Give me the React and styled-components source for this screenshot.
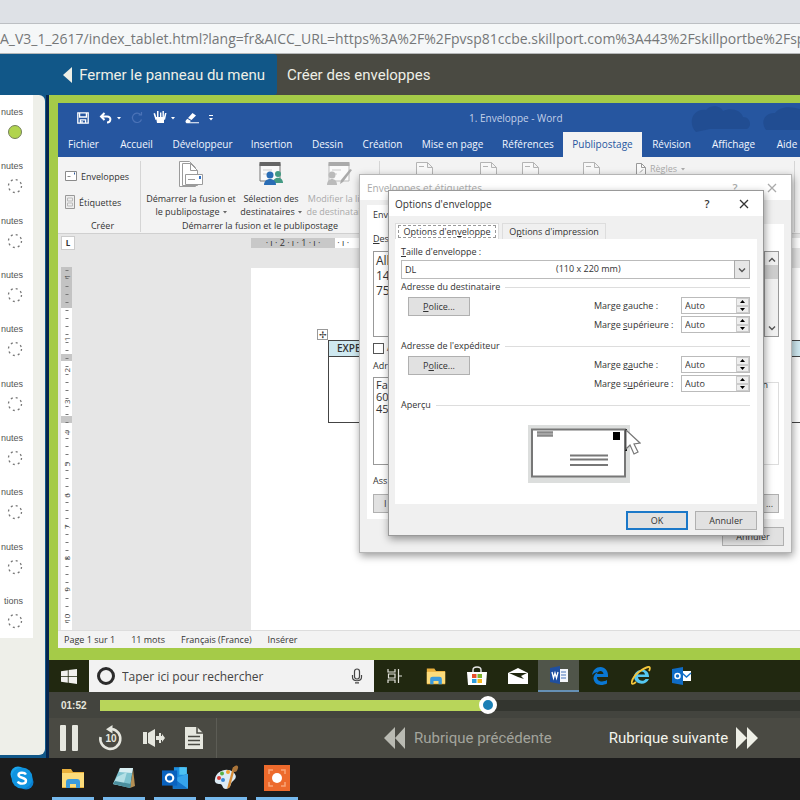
import styled, { createGlobalStyle } from 'styled-components';

const GlobalStyle = createGlobalStyle`
  * {
    box-sizing: border-box;
  }

  body {
    margin: 0;
    overflow: hidden;
    font-family: 'Open Sans', 'Noto Sans', sans-serif;
    font-size: 9px;
    color: #333;
  }

  button,
  input,
  select,
  textarea {
    margin: 0;
    padding: 0;
    border: 0;
    border-radius: 0;
    background: none;
    color: inherit;
    font: inherit;
  }

  svg {
    display: block;
    flex: none;
  }
`;

const lessons = Array.from({ length: 10 }, (_, i) => ({
  unit: i === 9 ? 'tions' : 'nutes',
  done: i === 0,
}));

const wordTabs = [
  'Fichier',
  'Accueil',
  'Développeur',
  'Insertion',
  'Dessin',
  'Création',
  'Mise en page',
  'Références',
  'Publipostage',
  'Révision',
  'Affichage',
  'Aide',
];

/* ---------- icons ---------- */

const SaveIcon = () => (
  <svg width='12' height='12' viewBox='0 0 12 12' fill='none' stroke='#fff' strokeWidth='1.3'>
    <path d='M.8.8h10.4v10.4H.8zM2.6 1v4h6.8V1M3.4 11V7.8h5.2V11' />
    <path d='M5 9v2' />
  </svg>
);

const UndoIcon = () => (
  <svg width='14' height='12' viewBox='0 0 14 12' fill='none' stroke='#fff' strokeWidth='2'>
    <path d='M2 4.5h6c5 0 4 6 0 6M5.5 1 2 4.5 5.5 8' />
  </svg>
);

const RedoIcon = () => (
  <svg width='12' height='12' viewBox='0 0 12 12' fill='none' stroke='#4a72b6' strokeWidth='1.2'>
    <path d='M9.5 2.5a4.7 4.7 0 1 0 1 5M7.5 3h3V0' />
  </svg>
);

const TouchIcon = () => (
  <svg width='14' height='13' viewBox='0 0 14 13' fill='#fff'>
    <path d='M3 6h8v6H4zM.5 2.5 2 2l2 6-1.5 1zM4 0h1.5v7H4zM7 1.5h1.4V7H7zM9.5 0h1.4v7H9.5zM12 2h1.5L12 9l-1.5-1z' />
  </svg>
);

const EraserIcon = () => (
  <svg width='14' height='12' viewBox='0 0 14 12' fill='#fff'>
    <path d='M7.5 1 11 3.5 6.5 8 3 6zM2.3 6.8 6 9l-1.5 1.3H14v1H1.5C0 10 0 9 2.3 6.8z' />
  </svg>
);

const Caret = ({ color = '#fff' }) => (
  <svg width='4' height='4' viewBox='0 0 4 4' fill={color}>
    <path d='M0 1h4L2 3.4z' />
  </svg>
);

const MoreIcon = () => (
  <svg width='4' height='6' viewBox='0 0 4 6' fill='#fff'>
    <path d='M0 0h4v1H0zM0 3h4L2 5.5z' />
  </svg>
);

const EnvelopeIcon = () => (
  <svg width='12' height='10' viewBox='0 0 12 10' fill='#fff' stroke='#8a8a8a'>
    <path d='M.5.5h11v9H.5z' />
    <path d='M2.5 5.5h3' />
    <path d='M9 2.5h1' stroke='#2b579a' strokeWidth='2' />
  </svg>
);

const LabelIcon = () => (
  <svg width='10' height='14' viewBox='0 0 10 14' fill='#eee' stroke='#999'>
    <path d='M.5.5h9v13h-9z' />
    <path d='M2.5 3h5v3h-5zM2.5 8h5v3h-5z' stroke='#bbb' />
  </svg>
);

const RulesIcon = () => (
  <svg width='10' height='12' viewBox='0 0 10 12' fill='#fafafa' stroke='#999'>
    <path d='M.5.5h5l4 4v7h-9z' />
    <path d='M5.500.5v4h4M4 9.5l3-3' fill='none' />
  </svg>
);

const MergeIcon = () => (
  <svg width='26' height='26' viewBox='0 0 26 26' fill='#fff' stroke='#9b9b9b'>
    <path d='M1.5.5h10l6 6v19h-16z' />
    <path d='M4.5 2.5h8l7 7v15h-15z' />
    <path d='M12.5 2.5v7h7' fill='none' />
    <path d='M7.5 13.5h17v10h-17z' />
    <path d='M10 18.5h7' />
    <path d='M22 15v3' stroke='#2f6fc4' strokeWidth='2' />
  </svg>
);

const PeopleIcon = ({ muted }) => (
  <svg width='26' height='26' viewBox='0 0 26 26'>
    <path d='M2 2.5h20V20H2z' fill='#fafafa' stroke={muted ? '#bbb' : '#777'} />
    <path d='M1.5 1h21v4h-21z' fill={muted ? '#aaa' : '#666'} />
    <path d='M5 9h9M5 13h5' stroke='#ccc' />
    {!muted && <circle cx='20' cy='13' r='3' fill='#439a83' />}
    {!muted && <path d='M15 22c0-7 10-7 10 0z' fill='#439a83' />}
    {muted && <path d='m25 9-9 12-3 2 1-4 9-11z' fill='#aaa' />}
    <circle cx={muted ? 5 : 12} cy='14' r='3.5' fill={muted ? '#bbb' : '#2a6db5'} />
    <path d={muted ? 'M0 24c0-8 10-8 10 0z' : 'M6 24c0-8 12-8 12 0z'} fill={muted ? '#bbb' : '#2a6db5'} />
  </svg>
);

const FadedPageIcon = () => (
  <svg width='18' height='20' viewBox='0 0 18 20' fill='#f8f8f8' stroke='#b4b4b4'>
    <path d='M.5 1.5h11l5 5v13H.5zM11.500 1.5v5h5' />
    <path d='M3 5.5h5' />
  </svg>
);

const CloseIcon = ({ color }) => (
  <svg width='10' height='10' viewBox='0 0 10 10' stroke={color} strokeWidth='1.3'>
    <path d='m1 1 8 8M9 1 1 9' />
  </svg>
);

const Chevron = ({ up }) => (
  <svg width='8' height='6' viewBox='0 0 8 6' fill='none' stroke='#555' strokeWidth='1.4'>
    <path d={up ? 'm1 4.5 3-3 3 3' : 'm1 1.5 3 3 3-3'} />
  </svg>
);

const TitleClouds = () => (
  <svg width='110' height='29' viewBox='0 0 110 29' fill='#214d92'>
    <path d='M6 29C-3 20 3 5 16 7c5-6 15-4 17 1 8-4 18-1 20 6 8 0 9 10 4 12H20z' />
    <path d='M76 27c-7-10 1-18 9-17 6-8 18-6 25-4v21z' />
  </svg>
);

const WindowsLogo = () => (
  <svg width='16' height='15' viewBox='0 0 16 15' fill='#f1f1ee'>
    <path d='M0 2.2 6.8 1.2V7H0zM7.6 1 16 0v7H7.6zM0 7.8h6.8v5.9L0 12.8zM7.6 7.8H16V15l-8.4-1.2z' />
  </svg>
);

const MicIcon = () => (
  <svg width='12' height='16' viewBox='0 0 12 16' fill='none' stroke='#444' strokeWidth='1.2'>
    <rect x='3.5' y='1' width='5' height='10' rx='2.5' />
    <path d='M1.5 7v2c0 5 9 5 9 0V7M4 14.8h4' />
  </svg>
);

const TaskViewIcon = () => (
  <svg width='15' height='14' viewBox='0 0 15 14' fill='none' stroke='#e4e4dc' strokeWidth='1.2'>
    <path d='M1 0v3h7V0M1 14v-3h7v3M1.5 5h6.5v4H1.500zM11.5 0v14M11.5 7H15' />
  </svg>
);

const FolderIcon = ({ size = 20 }) => (
  <svg width={size} height={size} viewBox='0 0 24 24'>
    <path d='M1 3h9l2 3h11v16H1z' fill='#e9b03c' />
    <path d='M1 7h22v14H1z' fill='#fcdc7b' />
    <path d='M5 22v-6c0-2 1-3 3-3h8c2 0 3 1 3 3v6h-4v-4H9v4z' fill='#3c9bdc' />
  </svg>
);

const StoreIcon = () => (
  <svg width='22' height='20' viewBox='0 0 22 20'>
    <path d='M7 6V4c0-4 8-4 8 0v2' fill='none' stroke='#e8e8e8' strokeWidth='1.4' />
    <path d='M1 6h20l-1 13H2z' fill='#fff' />
    <path d='M6 8h4.5v4H6z' fill='#e8502d' />
    <path d='M11.5 8H16v4h-4.500z' fill='#7fb52b' />
    <path d='M6 13h4.5v4H6z' fill='#2d9fe0' />
    <path d='M11.5 13H16v4h-4.500z' fill='#f5b71c' />
  </svg>
);

const MailIcon = () => (
  <svg width='22' height='18' viewBox='0 0 22 18'>
    <path d='m1 6 10-5 10 5v11H1z' fill='#fff' />
    <path d='M2 6h18l-6 3 3 3-6-2z' fill='#1f260e' />
  </svg>
);

const WordIcon = () => (
  <svg width='18' height='18' viewBox='0 0 18 18'>
    <path d='M9 3h9v13H9z' fill='#f4f6fb' />
    <path d='M11 6h5M11 9h5M11 12h5' stroke='#4673b8' />
    <path d='m0 2 10-2v18L0 16z' fill='#1f4fa0' />
    <path d='m2 6 1.5 6L5 7l1.5 5L8 6' fill='none' stroke='#fff' strokeWidth='1.3' />
  </svg>
);

const EdgeIcon = () => (
  <svg width='18' height='18' viewBox='0 0 18 18'>
    <path
      d='M1 8C2 3 5 0 9.5 0 14 0 17 4 17 8v2H6c0 5 6 5.5 10 3v3.5C9 20 3 17 2.5 11.5 2.5 8 5 6 7 5 4.5 5 2 6.5 1 8zM6 7h6.500C12 3 7 3 6 7z'
      fill='#0a78d4'
    />
  </svg>
);

const ExplorerIcon = () => (
  <svg width='20' height='20' viewBox='0 0 20 20'>
    <path
      d='M18 11H7c0 4 6 5 7.5 2H18C15 20 4 19 3 11 3 3 17 .5 18 10zM7 8.5h7c-.5-4-6.500-4-7 0z'
      fill='#55c8f2'
    />
    <path d='M5 16c-7 6-5-4 3-10S21-1 18 5' fill='none' stroke='#f3c63b' strokeWidth='1.8' />
  </svg>
);

const OutlookIcon = () => (
  <svg width='26' height='26' viewBox='0 0 24 24'>
    <path d='M11 2h10v18H11z' fill='#1d8fe0' />
    <path d='M16 2h7v7h-7z' fill='#4cc2f5' />
    <path d='M10 13 24 8v14H10z' fill='#35a4ec' />
    <path d='m10 12 14 10H10z' fill='#1473c8' />
    <path d='M0 5h14v14H0z' fill='#0a62be' />
    <circle cx='7' cy='12' r='3.4' fill='none' stroke='#fff' strokeWidth='2' />
  </svg>
);

const OutlookOldIcon = () => (
  <svg width='20' height='18' viewBox='0 0 20 18'>
    <path d='M10 4h9v10h-9z' fill='#fff' />
    <path d='m10 6 4.5 4L19 6' fill='none' stroke='#1371cc' strokeWidth='1.5' />
    <path d='m0 2 11-2v18L0 16z' fill='#0f6cc6' />
    <circle cx='5.5' cy='9' r='2.5' fill='none' stroke='#fff' strokeWidth='1.5' />
  </svg>
);

const SkypeIcon = () => (
  <svg width='24' height='24' viewBox='0 0 24 24'>
    <circle cx='8' cy='8' r='7.5' fill='#1ba4ec' />
    <circle cx='16' cy='16' r='7.5' fill='#0a7fd0' />
    <circle cx='12' cy='12' r='10.5' fill='#0f94e0' />
    <path
      d='M16 8.5C14.5 6 8.5 6 8.5 9c0 3.5 7.5 2 7.5 5.8 0 3.7-7 3.5-8.2.7'
      fill='none'
      stroke='#fff'
      strokeWidth='2.4'
    />
  </svg>
);

const NotepadIcon = () => (
  <svg width='24' height='24' viewBox='0 0 24 24'>
    <path d='m21 3 2 17-5 2z' fill='#b58f54' />
    <path d='M8 2h13l-3 20L1 18z' fill='#7fc3cf' />
    <path d='M8 2h13l-1 5-13-1z' fill='#d9eef2' />
    <path d='m5 11 10-5-4 14-10-2z' fill='#b5e0e6' />
    <path d='m1 18 17 4 1-4-16-3z' fill='#4b8f9e' />
  </svg>
);

const PaintIcon = () => (
  <svg width='26' height='26' viewBox='0 0 26 26'>
    <path d='M2 14C3 6 14 2 20 7c6 5 1 8-1 10-2 3-1 6-6 7-4 0-3-5-6-5s-6-1-5-5z' fill='#dcebf5' />
    <circle cx='6' cy='13' r='2' fill='#d83c36' />
    <circle cx='9' cy='8.5' r='2' fill='#57b146' />
    <circle cx='15' cy='7' r='2' fill='#f0a030' />
    <circle cx='10' cy='15' r='2' fill='#3987d6' />
    <path d='m22 3-5 19-3 2 1-4 5-18z' fill='#d58a35' />
    <path d='M20 4c0-4 6-5 5-1s-2 4-5 4z' fill='#a9743a' />
  </svg>
);

const CaptureIcon = () => (
  <svg width='26' height='26' viewBox='0 0 26 26'>
    <path d='M0 0h26v26H0z' fill='#ed6a2c' />
    <circle cx='13' cy='13' r='5' fill='#fff' />
    <path
      d='M5 9V5h4M17 5h4v4M21 17v4h-4M9 21H5v-4'
      fill='none'
      stroke='#f9a577'
      strokeWidth='1.5'
    />
  </svg>
);

const PauseIcon = () => (
  <svg width='20' height='28' viewBox='0 0 20 28' fill='#e6e7df'>
    <rect x='1' y='1' width='6' height='26' rx='1' />
    <rect x='13' y='1' width='6' height='26' rx='1' />
  </svg>
);

const BackTenIcon = () => (
  <svg width='26' height='26' viewBox='0 0 26 26'>
    <path d='M14 4a10 10 0 1 1-11.500 8' fill='none' stroke='#e6e7df' strokeWidth='2.6' />
    <path d='M14.500 0v8.500L8 4.200z' fill='#e6e7df' />
    <text x='13' y='17' textAnchor='middle' fontFamily='Liberation Sans' fontWeight='700' fontSize='10' fill='#e6e7df'>
      10
    </text>
  </svg>
);

const VolumeIcon = () => (
  <svg width='22' height='18' viewBox='0 0 22 18' fill='#e6e7df'>
    <path d='M0 3h4v12H0zM5 4l7-4v18l-7-4zM13 7h3V4h2v3h1V5l3 4-3 4v-2h-1v3h-2v-3h-3z' />
  </svg>
);

const TranscriptIcon = () => (
  <svg width='20' height='22' viewBox='0 0 20 22'>
    <path d='M1 0h12l6 6v16H1z' fill='#e6e7df' />
    <path d='M4 9.5h12M4 13.5h12M4 17.5h12M13 0v6h6' fill='none' stroke='#4a4a43' strokeWidth='1.5' />
  </svg>
);

const DoubleArrow = ({ left, color }) => (
  <svg width='22' height='22' viewBox='0 0 22 22' fill={color}>
    <path d={left ? 'M11 0v22L0 11zM21 0v22L11 11z' : 'M0 0v22l11-11zM11 0v22l11-11z'} />
  </svg>
);

const StatusRing = ({ done }) => (
  <svg width='16' height='16' viewBox='0 0 16 16'>
    {done ? (
      <circle cx='8' cy='8' r='6.5' fill='#b1d44e' stroke='#75805a' />
    ) : (
      <circle cx='8' cy='8' r='6.5' fill='none' stroke='#777' strokeWidth='1.3' strokeDasharray='2 3.1' />
    )}
  </svg>
);

const EnvelopePreview = () => (
  <svg width='102' height='58' viewBox='0 0 102 58'>
    <path d='M0 0h102v58H0z' fill='#dcdedd' />
    <path d='M4 4.5h93v47H4z' fill='#fff' stroke='#777' strokeWidth='2' />
    <path d='M98 4v22' stroke='#111' strokeWidth='2' />
    <path d='M9 7.5h16M9 10.5h16' stroke='#888' strokeWidth='2.5' />
    <path d='M85 7h7v8h-7z' fill='#000' />
    <path d='M42 30.5h38M42 34.5h38M42 40h38' stroke='#777' strokeWidth='2' />
  </svg>
);

const CursorIcon = () => (
  <svg width='16' height='28' viewBox='0 0 16 28' fill='#fff' stroke='#777' strokeWidth='1.2'>
    <path d='M1 1v19l4-4 4 9 4-2-4-8 6-1z' />
  </svg>
);

const VerticalRuler = () => (
  <svg width='11' height='363' viewBox='0 0 11 363'>
    <path d='M0 0h11v363H0z' fill='#fff' />
    <path d='M0 0h11v41H0z' fill='#c3c3c3' />
    <path d='M0 87h11v7H0zM0 149h11v7H0z' fill='#c6c6c6' />
    <path d='M6 3v357' stroke='#777' strokeWidth='3' strokeDasharray='1 7' />
    {[-1, 1, 2, 3, 4, 5, 6, 7, 8, 9, 10].map((n) => (
      <text
        key={n}
        transform={`translate(9 ${43 + n * 31.3}) rotate(-90)`}
        fontSize='8'
        fill='#444'
      >
        {Math.abs(n)}
      </text>
    ))}
  </svg>
);

/* ---------- components ---------- */

const EnvelopeDialog = () => (
  <BackDialog>
    <DialogTitle $muted>
      <h2>Enveloppes et étiquettes</h2>
      <TitleButton aria-label='Aide'>?</TitleButton>
      <TitleButton aria-label='Fermer'>
        <CloseIcon color='#aaa' />
      </TitleButton>
    </DialogTitle>
    <BackTabs>
      <button>Env</button>
    </BackTabs>
    <BackPanel>
      <label htmlFor='recipient'>
        <u>D</u>es
      </label>
      <RecipientBox>
        <textarea id='recipient' readOnly value={'All\n14\n75'} />
        <ScrollRail>
          <Chevron up />
          <ScrollThumb />
          <Chevron />
        </ScrollRail>
      </RecipientBox>
      <CheckLabel>
        <input type='checkbox' />A
      </CheckLabel>
      <label htmlFor='sender'>Adr</label>
      <SenderRow>
        <textarea id='sender' readOnly value={'Fa\n60\n45'} />
        <SenderGroup>n</SenderGroup>
      </SenderRow>
      <p>Ass</p>
      <BackActions>
        <DialogButton>I</DialogButton>
        <DialogButton>...</DialogButton>
      </BackActions>
    </BackPanel>
    <BackFooter>
      <DialogButton>Annuler</DialogButton>
    </BackFooter>
  </BackDialog>
);

const MarginField = ({ id, before, accessKey, after }) => (
  <MarginRow>
    <label htmlFor={id}>
      {before}
      <u>{accessKey}</u>
      {after}
    </label>
    <Spinner>
      <input id={id} defaultValue='Auto' />
      <SpinButtons>
        <button aria-label='Augmenter'>
          <svg width='5' height='3' viewBox='0 0 5 3'>
            <path d='M0 3h5L2.5 0z' />
          </svg>
        </button>
        <button aria-label='Diminuer'>
          <svg width='5' height='3' viewBox='0 0 5 3'>
            <path d='M0 0h5L2.5 3z' />
          </svg>
        </button>
      </SpinButtons>
    </Spinner>
  </MarginRow>
);

const FontSection = ({ title, id, fontLabel, keys }) => (
  <Section>
    <SectionTitle>{title}</SectionTitle>
    <SectionBody>
      <DialogButton>{fontLabel}</DialogButton>
      <div>
        <MarginField id={`${id}-left`} {...keys[0]} />
        <MarginField id={`${id}-top`} {...keys[1]} />
      </div>
    </SectionBody>
  </Section>
);

const OptionsDialog = () => (
  <FrontDialog>
    <DialogTitle>
      <h2>Options d'enveloppe</h2>
      <TitleButton aria-label='Aide'>?</TitleButton>
      <TitleButton aria-label='Fermer'>
        <CloseIcon color='#333' />
      </TitleButton>
    </DialogTitle>
    <DialogTabs>
      <DialogTab $active>
        <span>
          Options d'en<u>v</u>eloppe
        </span>
      </DialogTab>
      <DialogTab>
        <span>
          O<u>p</u>tions d'impression
        </span>
      </DialogTab>
    </DialogTabs>
    <FrontPanel>
      <label htmlFor='size'>
        <u>T</u>aille d'enveloppe :
      </label>
      <SizeField>
        <select id='size' defaultValue='DL'>
          <option>DL</option>
        </select>
        <SizeHint>(110 x 220 mm)</SizeHint>
        <SelectArrow>
          <Chevron />
        </SelectArrow>
      </SizeField>
      <FontSection
        id='recipient-font'
        title='Adresse du destinataire'
        fontLabel={
          <>
            <u>P</u>olice...
          </>
        }
        keys={[
          { before: 'Marge ', accessKey: 'g', after: 'auche :' },
          { before: 'Marge ', accessKey: 's', after: 'upérieure :' },
        ]}
      />
      <FontSection
        id='sender-font'
        title="Adresse de l'expéditeur"
        fontLabel={
          <>
            P<u>o</u>lice...
          </>
        }
        keys={[
          { before: 'Marge g', accessKey: 'a', after: 'uche :' },
          { before: 'Marge s', accessKey: 'u', after: 'périeure :' },
        ]}
      />
      <SectionTitle>Aperçu</SectionTitle>
      <Preview>
        <EnvelopePreview />
        <Pointer>
          <CursorIcon />
        </Pointer>
      </Preview>
    </FrontPanel>
    <FrontFooter>
      <DialogButton $primary>OK</DialogButton>
      <DialogButton>Annuler</DialogButton>
    </FrontFooter>
  </FrontDialog>
);

const WordWindow = () => (
  <WordFrame>
    <QuickBar>
      <SaveIcon />
      <QuickPair>
        <UndoIcon />
        <Caret />
      </QuickPair>
      <RedoIcon />
      <QuickPair>
        <TouchIcon />
        <Caret />
      </QuickPair>
      <EraserIcon />
      <MoreIcon />
      <WordTitle>1. Enveloppe - Word</WordTitle>
      <TitleClouds />
    </QuickBar>
    <WordTabs>
      {wordTabs.map((name) => (
        <WordTab key={name} $active={name === 'Publipostage'}>
          {name}
        </WordTab>
      ))}
    </WordTabs>
    <Ribbon>
      <CreateGroup>
        <SmallButton>
          <EnvelopeIcon />
          Enveloppes
        </SmallButton>
        <SmallButton>
          <LabelIcon />
          Étiquettes
        </SmallButton>
        <GroupName>Créer</GroupName>
      </CreateGroup>
      <MergeGroup>
        <BigButtons>
          <BigButton>
            <MergeIcon />
            Démarrer la fusion et
            <span>
              le publipostage <Caret color='#666' />
            </span>
          </BigButton>
          <BigButton>
            <PeopleIcon />
            Sélection des
            <span>
              destinataires <Caret color='#666' />
            </span>
          </BigButton>
          <BigButton $muted>
            <PeopleIcon muted />
            Modifier la liste
            <span>de destinataires</span>
          </BigButton>
        </BigButtons>
        <GroupName>Démarrer la fusion et le publipostage</GroupName>
      </MergeGroup>
      <FieldsGroup>
        <FadedPageIcon />
        <FadedPageIcon />
        <FadedPageIcon />
        <FadedPageIcon />
        <RulesButton>
          <RulesIcon />
          Règles
          <Caret color='#aaa' />
        </RulesButton>
      </FieldsGroup>
    </Ribbon>
    <Workspace>
      <RulerColumn>
        <TabStop>L</TabStop>
        <VerticalRuler />
      </RulerColumn>
      <PageColumn>
        <HorizontalRuler>
          <span>· ı · 2 · ı · 1 · ı ·</span>
          <span> · ı ·</span>
        </HorizontalRuler>
        <Sheet>
          <MoveHandle>✢</MoveHandle>
          <SheetTable>
            <thead>
              <tr>
                <th>EXPE</th>
              </tr>
            </thead>
            <tbody>
              <tr>
                <td />
              </tr>
            </tbody>
          </SheetTable>
        </Sheet>
      </PageColumn>
    </Workspace>
    <StatusBar>
      <span>Page 1 sur 1</span>
      <span>11 mots</span>
      <span>Français (France)</span>
      <span>Insérer</span>
    </StatusBar>
    <EnvelopeDialog />
    <OptionsDialog />
  </WordFrame>
);

const App = () => (
  <>
    <GlobalStyle />
    <Screen>
      <TabStrip />
      <AddressBar>
        A_V3_1_2617/index_tablet.html?lang=fr&amp;AICC_URL=https%3A%2F%2Fpvsp81ccbe.skillport.com%3A443%2Fskillportbe%2Fsp
      </AddressBar>
      <PlayerHeader>
        <MenuToggle>
          <svg width='9' height='16' viewBox='0 0 9 16' fill='#eeefe6'>
            <path d='M9 0v16L0 8z' />
          </svg>
          Fermer le panneau du menu
        </MenuToggle>
        <h1>Créer des enveloppes</h1>
      </PlayerHeader>
      <PlayerBody>
        <Sidebar>
          <LessonList>
            {lessons.map((lesson, i) => (
              <li key={i}>
                <span>{lesson.unit}</span>
                <StatusRing done={lesson.done} />
              </li>
            ))}
          </LessonList>
        </Sidebar>
        <Stage>
          <Video>
            <WordWindow />
          </Video>
          <VideoTaskbar>
            <StartButton aria-label='Démarrer'>
              <WindowsLogo />
            </StartButton>
            <SearchBox>
              <CortanaRing />
              <input aria-label='Rechercher' placeholder='Taper ici pour rechercher' />
              <MicIcon />
            </SearchBox>
            <VideoApp aria-label='Vue des tâches'>
              <TaskViewIcon />
            </VideoApp>
            <VideoApp aria-label='Explorateur'>
              <FolderIcon />
            </VideoApp>
            <VideoApp aria-label='Store'>
              <StoreIcon />
            </VideoApp>
            <VideoApp aria-label='Courrier'>
              <MailIcon />
            </VideoApp>
            <VideoApp aria-label='Word' $active>
              <WordIcon />
            </VideoApp>
            <VideoApp aria-label='Edge'>
              <EdgeIcon />
            </VideoApp>
            <VideoApp aria-label='Internet Explorer'>
              <ExplorerIcon />
            </VideoApp>
            <VideoApp aria-label='Outlook'>
              <OutlookOldIcon />
            </VideoApp>
          </VideoTaskbar>
          <Progress>
            <label htmlFor='seek'>01:52</label>
            <input id='seek' type='range' min='0' max='1000' defaultValue='556' />
          </Progress>
          <Controls>
            <PlayerTools>
              <button aria-label='Pause'>
                <PauseIcon />
              </button>
              <button aria-label='Reculer de 10 secondes'>
                <BackTenIcon />
              </button>
              <button aria-label='Volume'>
                <VolumeIcon />
              </button>
              <button aria-label='Transcription'>
                <TranscriptIcon />
              </button>
            </PlayerTools>
            <TopicNav>
              <TopicButton $muted>
                <DoubleArrow left color='#b9bab2' />
                Rubrique précédente
              </TopicButton>
              <TopicButton>
                Rubrique suivante
                <DoubleArrow color='#eeefe6' />
              </TopicButton>
            </TopicNav>
          </Controls>
        </Stage>
      </PlayerBody>
      <Taskbar>
        <TaskButton aria-label='Skype'>
          <SkypeIcon />
        </TaskButton>
        <TaskButton aria-label='Explorateur' $open>
          <FolderIcon size={24} />
        </TaskButton>
        <TaskButton aria-label='Bloc-notes' $open>
          <NotepadIcon />
        </TaskButton>
        <TaskButton aria-label='Outlook' $open>
          <OutlookIcon />
        </TaskButton>
        <TaskButton aria-label='Paint' $open>
          <PaintIcon />
        </TaskButton>
        <TaskButton aria-label='Capture' $open>
          <CaptureIcon />
        </TaskButton>
      </Taskbar>
    </Screen>
  </>
);

/* ---------- browser and player ---------- */

const Screen = styled.div`
  display: flex;
  flex-direction: column;
  width: 100%;
  height: 100vh;
  overflow: hidden;
`;

const TabStrip = styled.div`
  height: 24px;
  background: #dee1e6;
  border-bottom: 1px solid #bcbfc3;
`;

const AddressBar = styled.div`
  height: 30px;
  overflow: hidden;
  background: #f5f7f8;
  border-bottom: 1px solid #b5b7b8;
  color: #757779;
  font-size: 14px;
  line-height: 30px;
  white-space: nowrap;
`;

const PlayerHeader = styled.header`
  display: flex;
  height: 41px;
  background: #4a4a42;
  color: #eeefe6;
  font-family: Roboto, 'Liberation Sans', sans-serif;

  h1 {
    margin: 0;
    padding-left: 10px;
    font-size: 15px;
    font-weight: 400;
    line-height: 42px;
  }
`;

const MenuToggle = styled.button`
  display: flex;
  align-items: center;
  justify-content: flex-end;
  gap: 7px;
  width: 277px;
  padding-right: 12px;
  background: #115788;
  border-radius: 0 3px 3px 0;
  font-size: 15px;
  white-space: nowrap;
`;

const PlayerBody = styled.div`
  display: flex;
  flex: 1;
  min-height: 0;
`;

const Sidebar = styled.nav`
  display: flex;
  flex: none;
  width: 49px;
  padding: 0 4px 3px 0;
  background: linear-gradient(90deg, #115788 46px, #06264f 46px);
`;

const LessonList = styled.ul`
  display: flex;
  flex: 1;
  flex-direction: column;
  justify-content: space-between;
  margin: 0;
  padding: 11px 22px 126px 0;
  list-style: none;
  border-radius: 0 6px 6px 0;
  background:
    linear-gradient(#fff, #fff) 0 0 / 33px 543px no-repeat,
    #eeefe9;
  color: #555;
  font-family: 'Liberation Sans', sans-serif;

  li {
    display: flex;
    flex-direction: column;
    align-items: flex-end;
    gap: 6px;
    line-height: 12px;
  }
`;

const Stage = styled.main`
  display: flex;
  flex: 1;
  flex-direction: column;
  min-width: 0;
  background: #4a4a43;
`;

const Video = styled.div`
  display: flex;
  flex: 1;
  min-height: 0;
  padding: 8px 0 12px 9px;
  background: #a5cb48;
`;

const VideoTaskbar = styled.div`
  display: flex;
  height: 32px;
  overflow: hidden;
  background: #212810;
`;

const StartButton = styled.button`
  display: grid;
  place-items: center;
  width: 40px;
`;

const SearchBox = styled.div`
  display: flex;
  align-items: center;
  gap: 7px;
  width: 285px;
  padding: 0 11px 0 8px;
  background: #f2f2f2;

  input {
    flex: 1;
    min-width: 0;
    font-size: 12px;
  }

  input::placeholder {
    color: #444;
    opacity: 1;
  }
`;

const CortanaRing = styled.span`
  width: 18px;
  height: 18px;
  border: 3px solid #2b2b2b;
  border-radius: 50%;
`;

const VideoApp = styled.button`
  display: grid;
  place-items: center;
  width: 41px;
  background: ${({ $active }) => ($active ? '#50554a' : 'none')};
  border-bottom: ${({ $active }) => ($active ? '2px solid #6690b5' : '0')};
`;

const Progress = styled.div`
  display: flex;
  align-items: center;
  height: 26px;
  padding-left: 12px;
  background: #43443e;
  color: #e6e7df;

  label {
    width: 39px;
    font-family: 'Liberation Sans', sans-serif;
    font-size: 10px;
    font-weight: 700;
  }

  input {
    flex: 1;
    height: 18px;
    appearance: none;
  }

  input::-webkit-slider-runnable-track {
    height: 11px;
    background: linear-gradient(90deg, #b8d55a 55.5%, #33352f 55.5%);
  }

  input::-webkit-slider-thumb {
    width: 18px;
    height: 18px;
    margin-top: -4px;
    appearance: none;
    background: #1a7fb5;
    border: 4px solid #fff;
    border-radius: 50%;
  }
`;

const Controls = styled.div`
  display: flex;
  align-items: center;
  height: 40px;
  color: #f3f4ec;
`;

const PlayerTools = styled.div`
  display: flex;
  align-items: center;
  gap: 19px;
  width: 168px;
  height: 40px;
  padding-left: 10px;
  border-right: 1px solid #5c5c55;
`;

const TopicNav = styled.div`
  display: flex;
  flex: 1;
  gap: 57px;
  padding-left: 167px;
`;

const TopicButton = styled.button`
  display: flex;
  align-items: center;
  gap: 8px;
  color: ${({ $muted }) => ($muted ? '#a3a49c' : 'inherit')};
  font-family: Roboto, 'Liberation Sans', sans-serif;
  font-size: 15px;
  white-space: nowrap;
`;

const Taskbar = styled.footer`
  display: flex;
  gap: 9px;
  height: 42px;
  padding-left: 1px;
  background: #1c1c1c;
`;

const TaskButton = styled.button`
  display: grid;
  place-items: center;
  width: 42px;
  border-bottom: 3px solid ${({ $open }) => ($open ? '#76b9ed' : 'transparent')};
`;

/* ---------- word ---------- */

const WordFrame = styled.div`
  position: relative;
  display: flex;
  flex: 1;
  flex-direction: column;
  min-width: 0;
  overflow: hidden;
  background: #e6e6e6;
`;

const QuickBar = styled.div`
  display: flex;
  align-items: center;
  gap: 10px;
  height: 29px;
  padding-left: 19px;
  background: #2656a0;
`;

const QuickPair = styled.span`
  display: flex;
  align-items: center;
  gap: 4px;
`;

const WordTitle = styled.span`
  width: 214px;
  margin-left: 246px;
  color: #c3d0e8;
  font-size: 10px;
`;

const WordTabs = styled.nav`
  display: grid;
  grid-template-columns: 51px 55px 77px 61px 51px 59px 81px 70px 79px 59px 65px 42px;
  height: 25px;
  background: #2656a0;
`;

const WordTab = styled.button`
  padding-bottom: 2px;
  background: ${({ $active }) => ($active ? '#f3f3f3' : 'none')};
  color: ${({ $active }) => ($active ? '#2656a0' : '#f2f6ff')};
  font-size: 10px;
  white-space: nowrap;
`;

const Ribbon = styled.div`
  display: flex;
  height: 77px;
  padding: 4px 0 1px;
  background: #f3f3f3;
  border-bottom: 1px solid #d0d0d0;
`;

const CreateGroup = styled.section`
  display: flex;
  flex: none;
  flex-direction: column;
  width: 83px;
  padding: 2px 0 0 7px;
  border-right: 1px solid #d5d5d5;
`;

const SmallButton = styled.button`
  display: flex;
  align-items: center;
  gap: 4px;
  height: 26px;
`;

const GroupName = styled.div`
  margin-top: auto;
  line-height: 13px;
  text-align: center;
  white-space: nowrap;
`;

const MergeGroup = styled.section`
  display: flex;
  flex: none;
  flex-direction: column;
  width: 239px;
  overflow: hidden;
  border-right: 1px solid #d5d5d5;
`;

const BigButtons = styled.div`
  display: grid;
  grid-template-columns: 100px 60px 78px;
`;

const BigButton = styled.button`
  display: flex;
  flex-direction: column;
  align-items: center;
  color: ${({ $muted }) => ($muted ? '#aaa' : 'inherit')};
  line-height: 13px;
  white-space: nowrap;

  svg {
    margin-bottom: 5px;
  }

  span {
    display: flex;
    align-items: center;
    gap: 3px;
  }

  span svg {
    margin: 0;
  }
`;

const FieldsGroup = styled.section`
  display: grid;
  flex: none;
  grid-template-columns: 64px 42px 61px 1fr;
  grid-auto-flow: column;
  grid-auto-columns: 158px;
  align-items: start;
  width: 415px;
  padding-left: 36px;
  border-right: 1px solid #d5d5d5;
`;

const RulesButton = styled.button`
  display: flex;
  align-items: center;
  gap: 4px;
  height: 15px;
  color: #aaa;
`;

const Workspace = styled.div`
  display: flex;
  flex: 1;
  min-height: 0;
  overflow: hidden;
`;

const RulerColumn = styled.div`
  display: flex;
  flex: none;
  flex-direction: column;
  gap: 17px;
  width: 193px;
  padding: 2px 0 0 3px;
`;

const TabStop = styled.span`
  width: 14px;
  height: 14px;
  background: #fff;
  border: 1px solid #ccc;
  font-size: 8px;
  font-weight: 700;
  line-height: 12px;
  text-align: center;
`;

const PageColumn = styled.div`
  display: flex;
  flex: 1;
  flex-direction: column;
`;

const HorizontalRuler = styled.div`
  display: flex;
  height: 10px;
  margin: 4px 0 20px;
  background: #fff;
  line-height: 10px;
  white-space: pre;

  span:first-child {
    width: 84px;
    background: #c8c8c8;
    text-align: center;
  }
`;

const Sheet = styled.div`
  position: relative;
  flex: 1;
  padding: 72px 0 0 77px;
  background: #fff;
`;

const MoveHandle = styled.span`
  position: absolute;
  top: 61px;
  left: 66px;
  width: 11px;
  height: 11px;
  border: 1px solid #999;
  line-height: 9px;
  text-align: center;
`;

const SheetTable = styled.table`
  width: 100%;
  border-collapse: collapse;

  th,
  td {
    border: 1px solid #444;
    border-right: 0;
  }

  th {
    height: 16px;
    padding: 0 0 0 8px;
    background: #cfe9f1;
    font-size: 10px;
    font-weight: 600;
    line-height: 15px;
    text-align: left;
  }

  td {
    height: 66px;
  }
`;

const StatusBar = styled.div`
  display: flex;
  align-items: center;
  gap: 16px;
  height: 18px;
  padding-left: 6px;
  background: #f3f3f3;
  border-top: 1px solid #ddd;
`;

/* ---------- dialogs ---------- */

const DialogFrame = styled.section`
  position: absolute;
  display: flex;
  flex-direction: column;
  background: #f0f0f0;
  border: 1px solid #999;
  box-shadow: 1px 3px 8px rgba(0, 0, 0, 0.4);
  white-space: nowrap;
`;

const BackDialog = styled(DialogFrame)`
  top: 71px;
  left: 301px;
  width: 433px;
  height: 379px;
  padding: 0 7px;
  border-color: #b5b5b5;
`;

const FrontDialog = styled(DialogFrame)`
  top: 87px;
  left: 330px;
  width: 376px;
  height: 346px;
  padding: 0 6px;
`;

const DialogTitle = styled.div`
  display: flex;
  flex: none;
  align-items: center;
  height: 25px;
  margin: 0 -7px;
  padding: 0 10px 0 7px;
  background: #fff;
  color: ${({ $muted }) => ($muted ? '#aaa' : '#333')};

  ${FrontDialog} & {
    margin: 0 -6px;
    padding-left: 6px;
  }

  h2 {
    flex: 1;
    margin: 0;
    font-size: 10px;
    font-weight: 400;
  }
`;

const TitleButton = styled.button`
  display: grid;
  place-items: center;
  width: 18px;
  margin-left: 19px;
  font-size: 11px;
  font-weight: 600;
`;

const BackTabs = styled.div`
  height: 24px;
  padding-top: 5px;

  button {
    width: 60px;
    height: 19px;
    padding-left: 6px;
    background: #fff;
    text-align: left;
  }
`;

const BackPanel = styled.div`
  display: flex;
  flex-direction: column;
  height: 295px;
  padding: 8px 5px 0 6px;
  background: #fff;

  label,
  p {
    flex: none;
    margin: 0;
    line-height: 14px;
  }

  textarea {
    display: block;
    height: 100%;
    resize: none;
    overflow: hidden;
    border: 1px solid #999;
    font-size: 12px;
    line-height: 15px;
    padding: 1px 2px;
  }
`;

const RecipientBox = styled.div`
  display: flex;
  height: 86px;
  margin-top: 5px;

  textarea {
    flex: 1;
  }
`;

const ScrollRail = styled.div`
  display: flex;
  flex-direction: column;
  align-items: center;
  justify-content: space-between;
  width: 15px;
  padding: 5px 0;
  background: #f0f0f0;
  border: 1px solid #999;
`;

const ScrollThumb = styled.span`
  width: 13px;
  height: 14px;
  margin: 2px 0 auto;
  background: #cdcdcd;
`;

const CheckLabel = styled.label`
  display: flex;
  align-items: center;
  gap: 3px;
  height: 22px;

  input {
    width: 11px;
    height: 11px;
    appearance: none;
    background: #fff;
    border: 1px solid #555;
  }
`;

const SenderRow = styled.div`
  display: flex;
  gap: 20px;
  height: 88px;
  margin: 4px 0 9px;

  textarea {
    width: 240px;
    font-size: 11px;
    line-height: 12px;
  }
`;

const SenderGroup = styled.div`
  flex: 1;
  padding-right: 10px;
  margin-top: 5px;
  border: 1px solid #ddd;
  line-height: 4px;
  text-align: right;
`;

const BackActions = styled.div`
  display: flex;
  justify-content: space-between;
  margin-top: 6px;

  button {
    padding: 0 5px 0 10px;
    text-align: right;
  }

  button:first-child {
    text-align: left;
  }
`;

const BackFooter = styled.div`
  display: flex;
  justify-content: flex-end;
  padding-top: 8px;
`;

const DialogButton = styled.button`
  width: 62px;
  height: 19px;
  background: #e1e1e1;
  border: ${({ $primary }) => ($primary ? '2px solid #1b78c8' : '1px solid #b0b0b0')};
  line-height: 15px;
`;

const DialogTabs = styled.div`
  display: flex;
  gap: 3px;
  height: 23px;
  padding-top: 7px;
`;

const DialogTab = styled.button`
  width: 104px;
  background: ${({ $active }) => ($active ? '#fff' : '#f0f0f0')};
  border: 1px solid #ddd;
  border-bottom: 0;

  span {
    display: block;
    margin: 0 2px;
    border: 1px ${({ $active }) => ($active ? 'dashed #999' : 'solid transparent')};
    line-height: 11px;
  }
`;

const FrontPanel = styled.div`
  height: 265px;
  padding: 6px 7px 0 6px;
  background: #fff;
  line-height: 14px;

  > label {
    display: block;
  }
`;

const SizeField = styled.div`
  position: relative;
  display: flex;
  height: 19px;
  margin: 1px 0;

  select {
    flex: 1;
    padding-left: 3px;
    appearance: none;
    border: 1px solid #bbb;
  }
`;

const SizeHint = styled.span`
  position: absolute;
  top: 2px;
  left: 155px;
`;

const SelectArrow = styled.span`
  position: absolute;
  top: 0;
  right: 0;
  display: grid;
  place-items: center;
  width: 16px;
  height: 19px;
  background: #e6e6e6;
  border: 1px solid #aaa;
  pointer-events: none;
`;

const Section = styled.div`
  height: 59px;
`;

const SectionTitle = styled.h3`
  display: flex;
  align-items: center;
  gap: 5px;
  margin: 0;
  font-size: 9px;
  font-weight: 400;

  &::after {
    content: '';
    flex: 1;
    height: 1px;
    background: #ddd;
  }
`;

const SectionBody = styled.div`
  display: flex;
  align-items: flex-start;
  justify-content: space-between;
  padding: 3px 0 0 7px;
`;

const MarginRow = styled.div`
  display: flex;
  align-items: center;
  height: 17px;
  margin-bottom: 2px;

  label {
    width: 87px;
  }
`;

const Spinner = styled.div`
  display: flex;
  width: 69px;
  height: 17px;
  border: 1px solid #bbb;

  input {
    flex: 1;
    min-width: 0;
    padding-left: 3px;
  }
`;

const SpinButtons = styled.div`
  display: grid;
  width: 13px;

  button {
    display: grid;
    place-items: center;
    background: #eee;
    border: 1px solid #ccc;
  }
`;

const Preview = styled.div`
  position: relative;
  width: 102px;
  margin: 13px 0 0 127px;
`;

const Pointer = styled.span`
  position: absolute;
  top: 4px;
  left: 97px;
`;

const FrontFooter = styled.div`
  display: flex;
  justify-content: flex-end;
  gap: 7px;
  padding-top: 7px;
`;

export default App;
